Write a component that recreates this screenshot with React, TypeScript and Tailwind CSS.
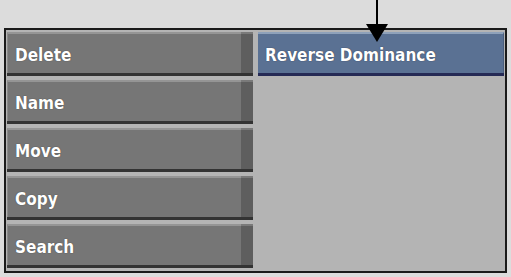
import React from "react"

const LEFT_ITEMS = ["Delete", "Name", "Move", "Copy", "Search"]

const FONT = { fontFamily: '"DejaVu Sans Condensed", "DejaVu Sans", sans-serif', fontStretch: "condensed" as const }

function GrayButton({ label }: { label: string }) {
  return (
    <div className="flex h-[44px] w-[246px] flex-col">
      <div className="flex flex-1">
        <div className="flex flex-1 items-center border-t-2 border-l border-t-[#959595] border-l-[#8a8a8a] bg-[#767676] pl-[7px] pt-[5px] text-[17px] font-bold text-white [text-shadow:0_0_1px_#333]">
          {label}
        </div>
        <div className="w-[12px] border-t-2 border-t-[#7a7a7a] bg-[#5e5e5e]" />
      </div>
      <div className="h-[3px] bg-[#333333]" />
    </div>
  )
}

export default function App() {
  return (
    <div className="relative h-[277px] w-[511px] overflow-hidden bg-[#dcdcdc]" style={FONT}>
      <div className="ml-[4px] mt-[28px] flex h-[245px] w-[503px] gap-[5px] border-2 border-[#1a1a1a] bg-[#b4b4b4] pl-[1px] pt-[2px]">
        <div className="flex flex-col gap-[4px]">
          {LEFT_ITEMS.map((item) => (
            <GrayButton key={item} label={item} />
          ))}
        </div>
        <div className="flex h-[44px] w-[246px] flex-col">
          <div className="flex flex-1 items-center border-t-2 border-r border-t-[#8ea1ba] border-r-[#4a5e7c] bg-[#5a7193] pl-[7px] pt-[5px] text-[17px] font-bold text-white [text-shadow:0_0_1px_#223]">
            Reverse Dominance
          </div>
          <div className="h-[3px] bg-[#252a55]" />
        </div>
      </div>

      {/* pointer arrow */}
      <div className="absolute left-[376px] top-0 h-[26px] w-[2px] bg-black" />
      <svg className="absolute left-[366px] top-[24px]" width="22" height="18" viewBox="0 0 22 18">
        <polygon points="0,0 22,0 11,18" fill="#000" />
      </svg>
    </div>
  )
}
